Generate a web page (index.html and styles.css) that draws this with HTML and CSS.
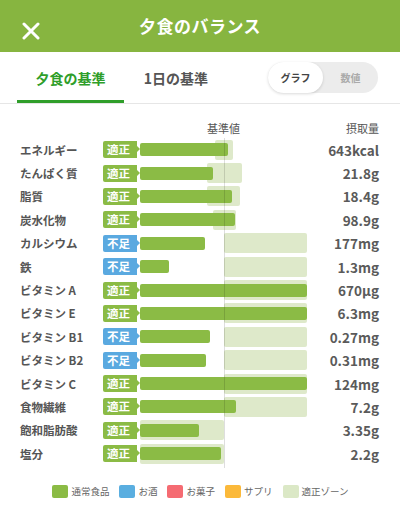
FILE: index.html
```html
<!DOCTYPE html>
<html lang="ja">
<head>
<meta charset="utf-8">
<link rel="stylesheet" href="styles.css">
</head>
<body>
<header class="topbar">
  <svg class="close" width="18" height="18" viewBox="0 0 18 18"><path d="M2 2 L16 16 M16 2 L2 16" stroke="#fff" stroke-width="3" stroke-linecap="round"/></svg>
  <h1 class="title">夕食のバランス</h1>
</header>
<nav class="tabs">
  <div class="tab active">夕食の基準</div>
  <div class="tab">1日の基準</div>
  <div class="toggle">
    <span class="knob">グラフ</span>
    <span class="off">数値</span>
  </div>
</nav>
<section class="chart">
  <div class="chart-head">
    <span></span><span></span>
    <span class="head-ref">基準値</span>
    <span class="head-val">摂取量</span>
  </div>
  <div class="rows">
    <div class="row"><span class="label">エネルギー</span><span class="badge ok">適正</span><span class="track"><i class="zone" style="left:75px;width:18px"></i><i class="bar" style="width:88px"></i></span><span class="val">643kcal</span></div>
    <div class="row"><span class="label">たんぱく質</span><span class="badge ok">適正</span><span class="track"><i class="zone" style="left:67px;width:35px"></i><i class="bar" style="width:73px"></i></span><span class="val">21.8g</span></div>
    <div class="row"><span class="label">脂質</span><span class="badge ok">適正</span><span class="track"><i class="zone" style="left:67px;width:33px"></i><i class="bar" style="width:92px"></i></span><span class="val">18.4g</span></div>
    <div class="row"><span class="label">炭水化物</span><span class="badge ok">適正</span><span class="track"><i class="zone" style="left:73px;width:23px"></i><i class="bar" style="width:95px"></i></span><span class="val">98.9g</span></div>
    <div class="row"><span class="label">カルシウム</span><span class="badge low">不足</span><span class="track"><i class="zone" style="left:84px;width:83px"></i><i class="bar" style="width:65px"></i></span><span class="val">177mg</span></div>
    <div class="row"><span class="label">鉄</span><span class="badge low">不足</span><span class="track"><i class="zone" style="left:84px;width:83px"></i><i class="bar" style="width:29px"></i></span><span class="val">1.3mg</span></div>
    <div class="row"><span class="label">ビタミン A</span><span class="badge ok">適正</span><span class="track"><i class="zone" style="left:84px;width:83px"></i><i class="bar" style="width:167px"></i></span><span class="val">670µg</span></div>
    <div class="row"><span class="label">ビタミン E</span><span class="badge ok">適正</span><span class="track"><i class="zone" style="left:84px;width:83px"></i><i class="bar" style="width:167px"></i></span><span class="val">6.3mg</span></div>
    <div class="row"><span class="label">ビタミン B1</span><span class="badge low">不足</span><span class="track"><i class="zone" style="left:84px;width:83px"></i><i class="bar" style="width:70px"></i></span><span class="val">0.27mg</span></div>
    <div class="row"><span class="label">ビタミン B2</span><span class="badge low">不足</span><span class="track"><i class="zone" style="left:84px;width:83px"></i><i class="bar" style="width:66px"></i></span><span class="val">0.31mg</span></div>
    <div class="row"><span class="label">ビタミン C</span><span class="badge ok">適正</span><span class="track"><i class="zone" style="left:84px;width:83px"></i><i class="bar" style="width:167px"></i></span><span class="val">124mg</span></div>
    <div class="row"><span class="label">食物繊維</span><span class="badge ok">適正</span><span class="track"><i class="zone" style="left:84px;width:83px"></i><i class="bar" style="width:96px"></i></span><span class="val">7.2g</span></div>
    <div class="row"><span class="label">飽和脂肪酸</span><span class="badge ok">適正</span><span class="track"><i class="zone" style="left:0px;width:84px"></i><i class="bar" style="width:59px"></i></span><span class="val">3.35g</span></div>
    <div class="row"><span class="label">塩分</span><span class="badge ok">適正</span><span class="track"><i class="zone" style="left:0px;width:84px"></i><i class="bar" style="width:81px"></i></span><span class="val">2.2g</span></div>
  </div>
</section>
<footer class="legend">
  <span class="item"><i class="sw sw-food"></i>通常食品</span>
  <span class="item"><i class="sw sw-alc"></i>お酒</span>
  <span class="item"><i class="sw sw-sweet"></i>お菓子</span>
  <span class="item"><i class="sw sw-supp"></i>サプリ</span>
  <span class="item"><i class="sw sw-zone"></i>適正ゾーン</span>
</footer>
</body>
</html>
```
FILE: styles.css
```css
* { box-sizing: border-box; }
html, body { margin: 0; padding: 0; background: #fff; }
body {
  width: 400px;
  height: 524px;
  overflow: hidden;
  font-family: "Noto Sans CJK JP", "Liberation Sans", sans-serif;
  color: #555;
}
.topbar {
  height: 52px;
  background: #87b540;
  display: flex;
  align-items: center;
  justify-content: center;
  position: relative;
}
.close { position: absolute; left: 22px; top: 22px; }
.title {
  margin: 0;
  color: #fff;
  font-size: 17px;
  font-weight: 700;
  letter-spacing: 0.5px;
  line-height: 20px;
}
.tabs {
  height: 52px;
  border-bottom: 1px solid #e6e6e6;
  display: flex;
  align-items: stretch;
  padding-left: 17px;
}
.tab {
  font-size: 14px;
  font-weight: 700;
  color: #555;
  display: flex;
  align-items: center;
  justify-content: center;
  padding-top: 1px;
}
.tab.active {
  width: 107px;
  color: #2f9e2a;
  border-bottom: 3px solid #2f9e2a;
  padding-top: 4px;
}
.tab:nth-child(2) { width: 92px; margin-left: 6px; }
.toggle {
  margin-left: 46px;
  align-self: center;
  width: 110px;
  height: 31px;
  border-radius: 16px;
  background: #ececec;
  display: flex;
  align-items: center;
  font-size: 10px;
  font-weight: 700;
}
.knob {
  width: 55px;
  height: 31px;
  border-radius: 16px;
  background: #fff;
  box-shadow: 0 1px 3px rgba(0,0,0,0.15);
  display: flex;
  align-items: center;
  justify-content: center;
  color: #444;
}
.off {
  flex: 1;
  text-align: center;
  color: #aaa;
}
.chart { padding: 0 21px 0 20px; }
.chart-head {
  display: grid;
  grid-template-columns: 83px 37px 167px 72px;
  padding-top: 16px;
  height: 34px;
  font-size: 11px;
  line-height: 16px;
  color: #555;
}
.head-ref { padding-left: 67px; }
.head-val { text-align: right; }
.rows { position: relative; }
.rows::after {
  content: "";
  position: absolute;
  left: 204px;
  top: 0;
  bottom: -3px;
  width: 1px;
  background: rgba(0,0,0,0.13);
}
.row {
  display: grid;
  grid-template-columns: 83px 37px 167px 72px;
  height: 23.4px;
  align-items: center;
}
.label {
  font-size: 11.5px;
  font-weight: 700;
  color: #555;
  white-space: nowrap;
}
.badge {
  position: relative;
  width: 34px;
  height: 17px;
  border-radius: 2px 0 0 2px;
  color: #fff;
  font-size: 11.5px;
  font-weight: 700;
  line-height: 17px;
  padding-left: 4px;
}
.badge::after {
  content: "";
  position: absolute;
  right: -3px;
  top: 5px;
  border-top: 3.5px solid transparent;
  border-bottom: 3.5px solid transparent;
  border-left: 3px solid;
}
.badge.ok { background: #8bbb45; }
.badge.ok::after { border-left-color: #8bbb45; }
.badge.low { background: #5aa9e0; }
.badge.low::after { border-left-color: #5aa9e0; }
.track { position: relative; height: 23.4px; }
.zone {
  position: absolute;
  top: 1.7px;
  height: 20px;
  background: #dee9ca;
  border-radius: 2px;
}
.bar {
  position: absolute;
  left: 0;
  top: 5.2px;
  height: 13px;
  background: #8bbb45;
  border-radius: 2px;
}
.val {
  text-align: right;
  font-size: 13.5px;
  font-weight: 700;
  color: #5a5a5a;
  white-space: nowrap;
}
.legend {
  margin-top: 20px;
  display: flex;
  justify-content: center;
  gap: 10px;
  font-size: 9.5px;
  color: #666;
  line-height: 13px;
  padding-left: 1px;
}
.item { display: flex; align-items: center; gap: 3px; }
.sw { display: block; width: 16px; height: 13px; border-radius: 2px; }
.sw-food { background: #8bbb45; }
.sw-alc { background: #5aaee0; }
.sw-sweet { background: #f56b72; }
.sw-supp { background: #fbb93a; }
.sw-zone { background: #dbe8c6; }
```
